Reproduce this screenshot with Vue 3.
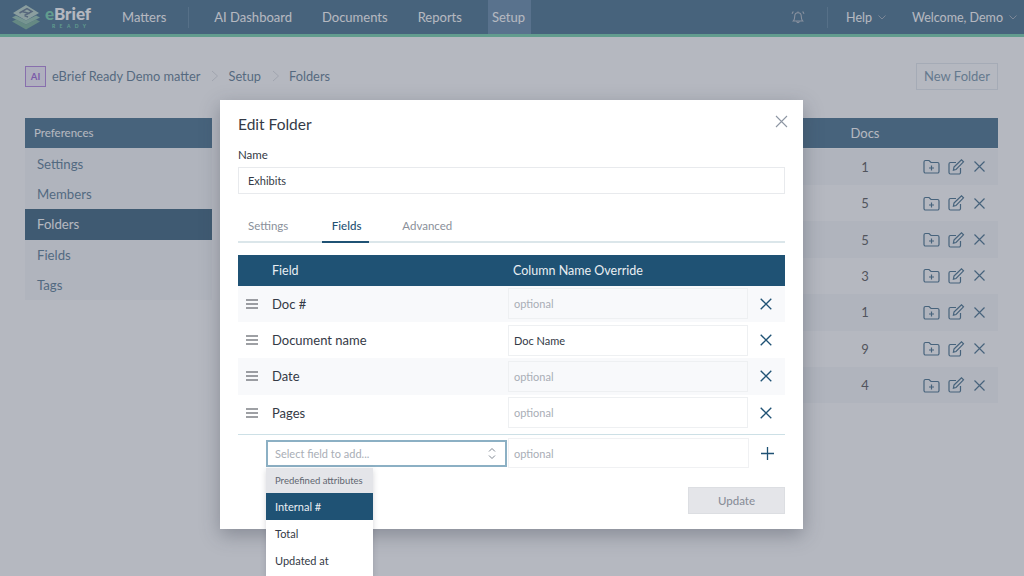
<script setup>
const navLeft = ['AI Dashboard', 'Documents', 'Reports']
const sideItems = ['Settings', 'Members', 'Folders', 'Fields', 'Tags']
const docs = [1, 5, 5, 3, 1, 9, 4]
const fields = [
  { name: 'Doc #', value: '' },
  { name: 'Document name', value: 'Doc Name' },
  { name: 'Date', value: '' },
  { name: 'Pages', value: '' }
]
</script>

<template>
  <div class="page">
    <header class="nav">
      <div class="brand">
        <svg class="logo" width="30" height="25" viewBox="0 0 30 25">
          <path d="M1 16.500 5 14.500 15 19.500 25 14.500 29 16.500 15 24.500Z" fill="#5da083"/>
          <path d="M1 12.500 5 10.500 15 15.500 25 10.500 29 12.500 15 19.500Z" fill="#7fb89f"/>
          <path d="M15 0 28 8 15 15.500 2 8Z" fill="#a9cbbb"/>
          <path d="M8.500 8 16 3.500 21 6.500 13.500 10.500M11 6.500 18.500 8.500M13.500 10.500 17 12" fill="none" stroke="#3f5a74" stroke-width="1.500"/>
        </svg>
        <div class="word">
          <div class="word-top"><span class="e">e</span>Brief</div>
          <div class="word-sub">READY</div>
        </div>
      </div>
      <span class="nav-link first">Matters</span>
      <span class="nav-sep"></span>
      <span v-for="n in navLeft" :key="n" class="nav-link">{{ n }}</span>
      <span class="nav-link active">Setup</span>
      <div class="nav-right">
        <svg class="bell" width="16" height="16" viewBox="0 0 16 16" fill="none" stroke="#a5b0bc" stroke-width="1.100">
          <path d="M3.400 12c1-1 1.300-2.200 1.300-4.500C4.700 5.200 6.200 3.700 8 3.700s3.300 1.500 3.300 3.800c0 2.300.3 3.500 1.300 4.500z"/>
          <path d="M6.600 12.300c.2 1.700 2.600 1.700 2.800 0M3.300 2.400 2 4.800M12.700 2.400 14 4.800M8 2.400v1.300"/>
        </svg>
        <span class="nav-sep r"></span>
        <span class="nav-link plain">Help</span>
        <svg class="chev" width="8" height="5" viewBox="0 0 8 5"><path d="M.5.5 4 4 7.500.5" fill="none" stroke="#8b9bac"/></svg>
        <span class="nav-link plain welcome">Welcome, Demo</span>
        <svg class="chev end" width="8" height="5" viewBox="0 0 8 5"><path d="M.5.5 4 4 7.500.5" fill="none" stroke="#8b9bac"/></svg>
      </div>
    </header>

    <div class="crumbs">
      <span class="badge">AI</span>
      <span class="crumb">eBrief Ready Demo matter</span>
      <svg class="gt" width="8" height="12" viewBox="0 0 8 12"><path d="M1 1l5.500 5L1 11" fill="none" stroke="#d5d7dc"/></svg>
      <span class="crumb">Setup</span>
      <svg class="gt" width="8" height="12" viewBox="0 0 8 12"><path d="M1 1l5.500 5L1 11" fill="none" stroke="#d5d7dc"/></svg>
      <span class="crumb">Folders</span>
      <button class="new-folder">New Folder</button>
    </div>

    <div class="content">
      <aside class="side">
        <div class="side-head">Preferences</div>
        <div class="side-list">
          <div v-for="s in sideItems" :key="s" class="side-item" :class="{ on: s === 'Folders' }">{{ s }}</div>
        </div>
      </aside>
      <section class="table">
        <div class="t-head"><span class="t-docs">Docs</span></div>
        <div v-for="(d, i) in docs" :key="i" class="t-row" :class="{ odd: i % 2 === 0 }">
          <span class="t-docs">{{ d }}</span>
          <span class="t-icons">
            <svg width="17" height="15" viewBox="0 0 17 15" fill="none" stroke="#1f5274" stroke-width="1.200">
              <path d="M1 3a1.500 1.500 0 0 1 1.500-1.500h3.500l2 2h6.500A1.500 1.500 0 0 1 16 5v7.500a1.500 1.500 0 0 1-1.500 1.500h-12A1.500 1.500 0 0 1 1 12.500z"/>
              <path d="M8.500 6.500v5M6 9h5"/>
            </svg>
            <svg width="17" height="16" viewBox="0 0 17 16" fill="none" stroke="#1f5274" stroke-width="1.200">
              <path d="M12.500 9v4.500A1.500 1.500 0 0 1 11 15H2.500A1.500 1.500 0 0 1 1 13.500V5a1.500 1.500 0 0 1 1.500-1.500H8"/>
              <path d="M6 8 13.500 .8l2 2L8 10.500l-2.600.6z"/>
            </svg>
            <svg width="13" height="13" viewBox="0 0 13 13" fill="none" stroke="#1f5274" stroke-width="1.200"><path d="M1.500 1.500l10 10M11.500 1.500l-10 10"/></svg>
          </span>
        </div>
      </section>
    </div>

    <div class="backdrop"></div>

    <div class="modal">
      <svg class="close" width="13" height="13" viewBox="0 0 13 13" fill="none" stroke="#8d96a3" stroke-width="1.100"><path d="M1 1l11 11M12 1 1 12"/></svg>
      <h2 class="title">Edit Folder</h2>
      <label class="lbl">Name</label>
      <div class="box name">Exhibits</div>
      <div class="tabs">
        <span class="tab">Settings</span>
        <span class="tab sel">Fields</span>
        <span class="tab">Advanced</span>
      </div>
      <div class="f-head">
        <span class="f-col">Field</span>
        <span class="f-over">Column Name Override</span>
      </div>
      <div v-for="(f, i) in fields" :key="f.name" class="f-row" :class="{ tint: i % 2 === 0 }">
        <svg class="drag" width="12" height="10" viewBox="0 0 12 10" stroke="#3e434b" stroke-width="1.100"><path d="M0 1h12M0 5h12M0 9h12"/></svg>
        <span class="f-name">{{ f.name }}</span>
        <div class="box cell" :class="{ ph: !f.value, tinted: i % 2 === 0 }">{{ f.value || 'optional' }}</div>
        <svg class="act" width="12" height="12" viewBox="0 0 12 12" fill="none" stroke="#1f5274" stroke-width="1.300"><path d="M.7.700l10.600 10.600M11.300.700 .7 11.300"/></svg>
      </div>
      <div class="add-row">
        <div class="select">
          <span>Select field to add...</span>
          <svg width="8" height="13" viewBox="0 0 8 13" fill="none" stroke="#7f8792"><path d="M1 4.500 4 1.500l3 3M1 8.500l3 3 3-3"/></svg>
        </div>
        <div class="box cell ph add">optional</div>
        <svg class="act" width="13" height="13" viewBox="0 0 13 13" fill="none" stroke="#1f5274" stroke-width="1.300"><path d="M6.500 0v13M0 6.500h13"/></svg>
      </div>
      <div class="foot"><button class="update">Update</button></div>
    </div>

    <div class="menu">
      <div class="m-head">Predefined attributes</div>
      <div class="m-item cur">Internal #</div>
      <div class="m-item">Total</div>
      <div class="m-item">Updated at</div>
    </div>
  </div>
</template>

<style>
html, body { margin: 0; overflow: hidden; }
</style>

<style scoped>
* { box-sizing: border-box; }
.page {
  position: relative;
  width: 1024px;
  height: 576px;
  overflow: hidden;
  background: #fff;
  font-family: "Lato", "Noto Sans", sans-serif;
  color: #1f5274;
}
.nav {
  display: flex;
  align-items: center;
  height: 37px;
  padding-left: 11px;
  background: #1f5274;
  border-bottom: 3px solid #56c79a;
}
.brand { display: flex; align-items: center; gap: 4px; width: 107px; }
.word-top { font-size: 17px; font-weight: 900; color: #fff; line-height: 17px; }
.e { color: #56c79a; }
.word-sub { font-size: 5px; letter-spacing: 4.400px; font-weight: 700; color: #56c79a; line-height: 7px; padding-left: 7px; margin-top: 1px; }
.nav-link { display: flex; align-items: center; height: 34px; padding: 0 4px; margin-right: 22px; font-size: 13px; color: #fff; }
.nav-link.first { margin-right: 18px; }
.nav-link.active { background: #457198; margin-right: 0; padding-right: 6px; }
.nav-sep { width: 1px; height: 21px; background: #3d6c8d; margin-right: 21px; }
.nav-right { display: flex; align-items: center; margin-left: auto; }
.bell { margin-right: 21px; }
.nav-sep.r { margin-right: 18px; }
.nav-link.plain { padding: 0; margin-right: 6px; font-size: 12.500px; }
.chev { margin-right: 26px; }
.welcome { margin-right: 7px; }
.chev.end { margin-right: 7px; }
.crumbs { display: flex; align-items: center; height: 78px; padding: 0 26px 0 25px; }
.badge {
  display: flex; align-items: center; justify-content: center;
  width: 21px; height: 21px; margin-right: 6px;
  border: 1px solid #a46bd8; background: #f3ecfb; color: #8a3fd1;
  font-size: 9.500px; font-weight: 700;
}
.crumb { font-size: 12.800px; color: #3c5f7c; }
.gt { margin: 0 9px 0 11px; }
.new-folder {
  margin-left: auto; width: 82px; height: 27px; padding: 0;
  background: transparent; border: 1px solid #dfe4ea; color: #5b8099;
  font: 13px "Lato", sans-serif;
}
.content { display: flex; gap: 24px; padding: 3px 26px 0 25px; }
.side { width: 187px; }
.side-head { height: 30px; padding: 0 0 1px 9px; display: flex; align-items: center; background: #1f5274; color: #fff; font-size: 11.500px; }
.side-list { background: #f4f6f8; padding-top: .5px; }
.side-item { height: 30.400px; padding-left: 12px; display: flex; align-items: center; font-size: 13.200px; color: #35607f; }
.side-item.on { background: #0f3f60; color: #fff; }
.table { flex: 1; }
.t-head { height: 30px; margin-bottom: .6px; background: #1f5274; color: #fff; font-size: 13px; display: flex; align-items: center; }
.t-row { height: 36.400px; display: flex; align-items: center; font-size: 13px; color: #333; }
.t-row.odd { background: #f4f6f8; }
.t-docs { flex: none; width: 30px; margin-left: 614px; text-align: center; }
.t-icons { display: flex; align-items: center; gap: 8px; margin-left: 43px; }

.backdrop { position: absolute; inset: 0; background: rgba(110, 116, 131, .51); }

.modal {
  position: absolute; left: 220px; top: 100px;
  width: 583px; height: 429px; padding: 16px 18px 0;
  background: #fff;
  box-shadow: 0 6px 18px rgba(50, 55, 70, .35);
}
.close { position: absolute; right: 15px; top: 15px; }
.title { margin: 0 0 15px; font-size: 15.500px; line-height: 17px; font-weight: 400; color: #343a46; }
.lbl { display: block; font-size: 11.500px; line-height: 14px; color: #343a46; margin-bottom: 5px; }
.box { display: flex; align-items: center; border: 1px solid #e8eaed; font-size: 11px; color: #343a46; }
.name { height: 27px; padding: 0 0 1px 9px; }
.tabs { display: flex; height: 36px; margin-top: 13px; border-bottom: 2px solid #dbe6ea; }
.tab { padding: 12px 10px 0; font-size: 11.500px; color: #8a909a; margin-right: 23.500px; }
.tab.sel { color: #1f5274; font-weight: 500; border-bottom: 2px solid #1f5274; height: 36px; padding: 12px 10px 0; width: 47px; margin-right: 23.500px; }
.f-head { display: flex; align-items: center; height: 30.500px; margin-top: 12px; background: #1f5274; color: #e9eef2; font-size: 12.500px; }
.f-col { width: 275px; padding-left: 34px; }
.f-row { display: flex; align-items: center; height: 36.400px; }
.f-row.tint { background: #f8f9fb; }
.drag { margin-left: 8px; margin-right: 14px; }
.f-name { width: 236px; font-size: 13px; color: #343a46; }
.cell { width: 240px; height: 31px; padding-left: 5px; background: #fff; border-color: #eef0f2; }
.cell.tinted { background: #f8f9fb; }
.cell.ph { color: #a9aeb6; }
.act { margin-left: 12px; }
.add-row { display: flex; align-items: center; height: 36px; border-top: 1px solid #cde0e6; padding: 1px 0 0 28px; margin-top: 3px; }
.select {
  display: flex; align-items: center; justify-content: space-between;
  width: 241px; height: 27px; padding: 0 9px 0 7px;
  border: 2px solid #8cb0c4; font-size: 11px; color: #a9aeb6;
}
.cell.add { width: 241px; height: 30px; margin-left: 1px; border-color: #f0f1f3; }
.foot { display: flex; justify-content: flex-end; margin-top: 17px; }
.update {
  width: 97px; height: 27px; padding: 0;
  background: #e4e5e9; border: 1px solid #dcdee2; color: #8a8f99;
  font: 500 11.500px "Lato", sans-serif;
}
.menu {
  position: absolute; left: 266px; top: 468px; bottom: 0; width: 107px;
  background: #fff;
  box-shadow: 0 2px 6px rgba(50, 55, 70, .2);
  font-size: 11px; color: #343a46;
}
.m-head { height: 25px; padding-left: 9px; display: flex; align-items: center; background: #e4e5e9; color: #5f6570; font-size: 9.500px; }
.m-item { height: 27.200px; padding-left: 9px; display: flex; align-items: center; }
.m-item.cur { background: #1f5274; color: #e9eef2; }
</style>
